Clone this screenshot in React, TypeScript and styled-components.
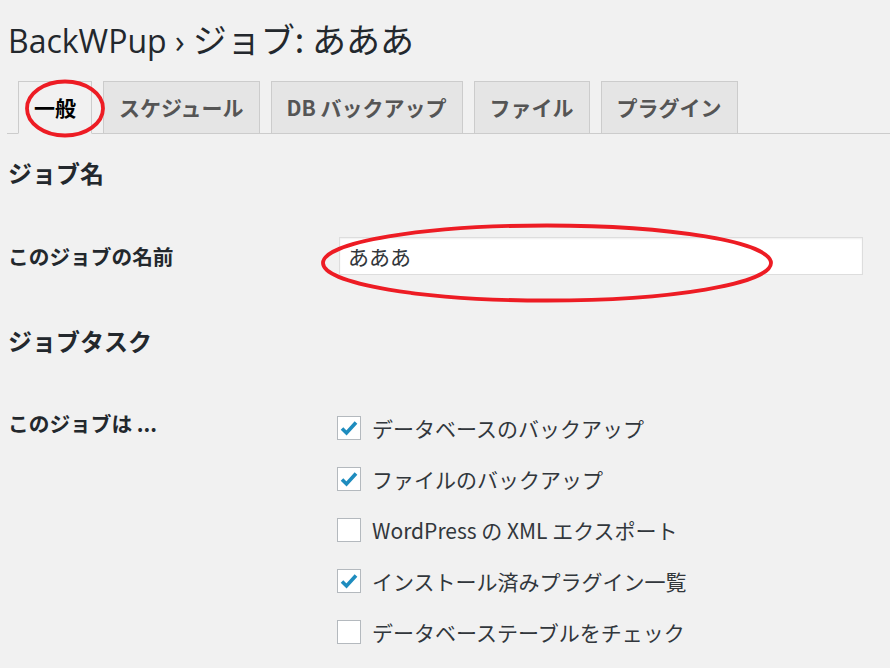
import styled, { createGlobalStyle } from 'styled-components';

const GlobalStyle = createGlobalStyle`
    html, body {
        margin: 0;
        background: #f1f1f1;
    }
    body {
        font-family: "Open Sans", "Noto Sans CJK JP", sans-serif;
        color: #23282d;
    }
`;

const Wrap = styled.div`
    position: relative;
    width: 890px;
    height: 668px;
    overflow: hidden;
    padding: 18px 0 0 8px;
    box-sizing: border-box;
`;

const Title = styled.h1`
    margin: 0;
    height: 45px;
    font-size: 32px;
    font-weight: 400;
    line-height: 45px;
    color: #23282d;
`;

const TitleJa = styled.span`
    font-family: "Noto Sans CJK JP", sans-serif;
    font-size: 34px;
    line-height: 1;
`;

const TabNav = styled.nav`
    display: flex;
    gap: 11px;
    margin: 18px 0 0 -1px;
    padding-left: 11px;
    border-bottom: 1px solid #ccc;
`;

const Tab = styled.a<{ $active?: boolean }>`
    display: block;
    height: 51px;
    line-height: 51px;
    padding: 0 15px;
    margin-bottom: -1px;
    border: 1px solid #ccc;
    border-bottom-color: ${p => (p.$active ? '#f1f1f1' : '#ccc')};
    background: ${p => (p.$active ? '#f1f1f1' : '#e5e5e5')};
    color: ${p => (p.$active ? '#000' : '#555')};
    font-family: "Noto Sans CJK JP", "Open Sans", sans-serif;
    font-size: 21px;
    font-weight: 700;
    white-space: nowrap;
`;

const SectionTitle = styled.h2<{ $top: number }>`
    margin: ${p => p.$top}px 0 0;
    font-family: "Noto Sans CJK JP", sans-serif;
    font-size: 24px;
    font-weight: 700;
    line-height: 32px;
`;

const FormRow = styled.div<{ $top: number }>`
    display: grid;
    grid-template-columns: 331px 524px;
    align-items: start;
    margin-top: ${p => p.$top}px;
`;

const Label = styled.div<{ $line: number }>`
    font-family: "Noto Sans CJK JP", sans-serif;
    font-size: 20.7px;
    font-weight: 700;
    line-height: ${p => p.$line}px;
    color: #23282d;
`;

const TextInput = styled.input`
    box-sizing: border-box;
    width: 524px;
    height: 38px;
    padding: 0 8px;
    border: 1px solid #ddd;
    box-shadow: inset 0 1px 2px rgba(0, 0, 0, 0.07);
    background: #fff;
    font-family: "Noto Sans CJK JP", sans-serif;
    font-size: 21px;
    color: #32373c;
    outline: none;
`;

const CheckList = styled.div`
    display: flex;
    flex-direction: column;
`;

const CheckItem = styled.label`
    display: flex;
    align-items: center;
    gap: 11px;
    height: 51px;
    margin-left: -2px;
    font-family: "Noto Sans CJK JP", "Open Sans", sans-serif;
    font-size: 21px;
    color: #32373c;
    white-space: nowrap;
`;

const Box = styled.span`
    box-sizing: border-box;
    display: flex;
    align-items: center;
    justify-content: center;
    width: 24px;
    height: 24px;
    border: 1.5px solid #b4b9be;
    background: #fff;
    flex: none;
`;

const Marks = styled.svg`
    position: absolute;
    left: 0;
    top: 0;
    pointer-events: none;
`;

const Check = () => (
    <svg width="18" height="16" viewBox="0 0 18 16">
        <path d="M2 8.5 L6.5 13 L16 2.5" fill="none" stroke="#1e8cbe" strokeWidth="3.6" strokeLinejoin="miter" />
    </svg>
);

const tasks = [
    { label: 'データベースのバックアップ', checked: true },
    { label: 'ファイルのバックアップ', checked: true },
    { label: 'WordPress の XML エクスポート', checked: false },
    { label: 'インストール済みプラグイン一覧', checked: true },
    { label: 'データベーステーブルをチェック', checked: false },
];

const tabs = ['一般', 'スケジュール', 'DB バックアップ', 'ファイル', 'プラグイン'];

const App = () => (
    <Wrap>
        <GlobalStyle />
        <Title>BackWPup › <TitleJa>ジョブ: あああ</TitleJa></Title>
        <TabNav>
            {tabs.map((t, i) => (
                <Tab key={t} $active={i === 0}>{t}</Tab>
            ))}
        </TabNav>

        <SectionTitle $top={23}>ジョブ名</SectionTitle>
        <FormRow $top={48}>
            <Label $line={38}>このジョブの名前</Label>
            <TextInput defaultValue="あああ" />
        </FormRow>

        <SectionTitle $top={50}>ジョブタスク</SectionTitle>
        <FormRow $top={45}>
            <Label $line={42}>このジョブは ...</Label>
            <CheckList>
                {tasks.map(t => (
                    <CheckItem key={t.label}>
                        <Box>{t.checked && <Check />}</Box>
                        {t.label}
                    </CheckItem>
                ))}
            </CheckList>
        </FormRow>

        {/* red hand-drawn highlight rings */}
        <Marks width="890" height="668">
            <ellipse cx="65" cy="108.5" rx="38" ry="27" fill="none" stroke="#ed1c24" strokeWidth="3.8" />
            <ellipse cx="547" cy="263" rx="224" ry="37.5" fill="none" stroke="#ed1c24" strokeWidth="3.8" />
        </Marks>
    </Wrap>
);

export default App;
